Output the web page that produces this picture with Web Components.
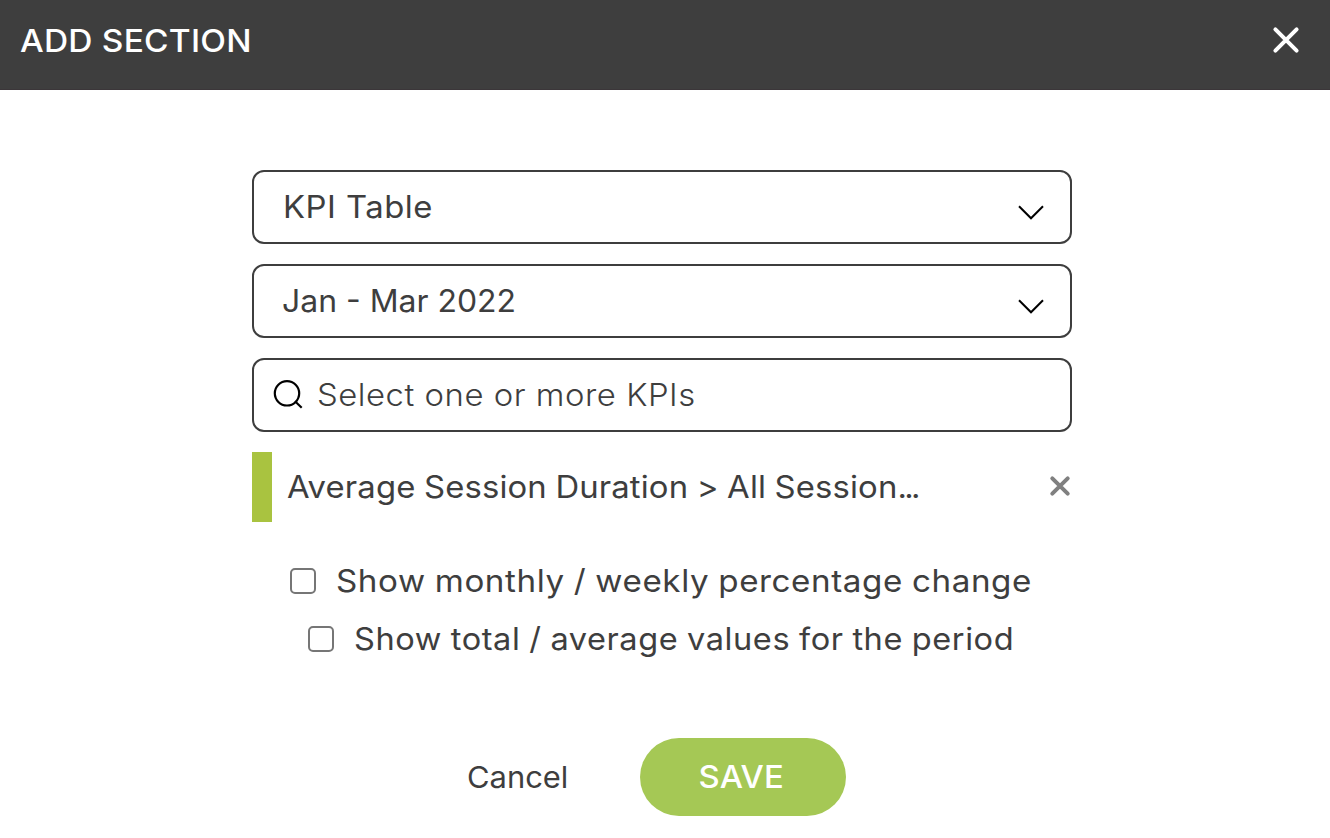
<!DOCTYPE html>
<html lang="en">
<head>
<meta charset="utf-8">
<title>Add section</title>
<style>
  html, body { margin: 0; height: 100%; }
  body {
    background: #fff;
    color: #3e3e3e;
    font: 400 31px/38px Inter, "Open Sans", sans-serif;
    overflow: hidden;
  }
</style>
</head>
<body>
<section-dialog></section-dialog>

<script>
const define = (name, markup) => {
  const template = document.createElement('template');
  template.innerHTML = markup;
  customElements.define(name, class extends HTMLElement {
    constructor() {
      super();
      this.attachShadow({ mode: 'open' }).append(template.content.cloneNode(true));
    }
  });
};

// Text with slightly extended letterforms; --stretch sets the horizontal scale.
define('wide-text', `
  <style>
    :host {
      display: inline-block; white-space: nowrap;
      transform: scaleX(var(--stretch, 1)); transform-origin: var(--origin, 0 50%);
      letter-spacing: var(--tracking, 0); word-spacing: var(--gap, 0);
    }
  </style>
  <slot></slot>
`);

define('dialog-header', `
  <style>
    :host {
      display: flex; align-items: center; justify-content: space-between;
      box-sizing: border-box; height: 90px; padding: 0 29px 9px 20px;
      background: #3e3e3e; border-bottom: 1px solid #3b3639; color: #fff;
      --stretch: 1.08; --tracking: .2px;
    }
    h1 { margin: 2px 0 0; font-size: 31px; font-weight: 500; }
    button { display: block; padding: 0; border: 0; background: none; color: inherit; }
    svg { display: block; }
  </style>
  <h1><wide-text><slot></slot></wide-text></h1>
  <button aria-label="Close">
    <svg width="30" height="30" viewBox="0 0 30 30" fill="none" stroke="currentColor" stroke-width="4" stroke-linecap="round"><path d="M4.4 4.4 25.6 25.6M25.6 4.4 4.4 25.6"/></svg>
  </button>
`);

define('select-field', `
  <style>
    :host {
      display: flex; align-items: center; justify-content: space-between;
      box-sizing: border-box; height: 74px; padding: 0 25px 0 var(--inset, 29px);
      border: 2px solid #3e3e3e; border-radius: 12px;
    }
    svg { display: block; margin-top: 10px; }
  </style>
  <wide-text><slot></slot></wide-text>
  <svg width="28" height="16" viewBox="0 0 28 16" fill="none" stroke="#000" stroke-width="2"><path d="M2 2.3 14 14.3 26 2.3"/></svg>
`);

define('search-field', `
  <style>
    :host {
      display: flex; align-items: center; gap: 12.6px;
      box-sizing: border-box; height: 74px; padding: 0 20px 0 19px;
      border: 2px solid #3e3e3e; border-radius: 12px;
      --stretch: 1.06; --tracking: .49px;
    }
    wide-text { font-weight: 300; }
    svg { display: block; flex: none; margin-top: -1px; }
  </style>
  <svg width="31" height="31" viewBox="0 0 31 31" fill="none" stroke="#000" stroke-width="2.2"><circle cx="14" cy="14.3" r="12.2"/><path d="M22 22.3 28.7 28.8"/></svg>
  <wide-text><slot></slot></wide-text>
`);

define('kpi-chip', `
  <style>
    :host {
      display: flex; align-items: center; justify-content: space-between;
      box-sizing: border-box; height: 70px;
      padding-left: 15px; border-left: 20px solid #a9c340;
      --stretch: 1.06; --tracking: .12px; --gap: -.8px;
    }
    button { display: block; padding: 0; border: 0; background: none; }
    svg { display: block; margin-top: -2px; }
  </style>
  <wide-text><slot></slot></wide-text>
  <button aria-label="Remove">
    <svg width="24" height="24" viewBox="0 0 24 24" fill="none" stroke="#808080" stroke-width="4" stroke-linecap="round"><path d="M4.3 4.3 19.7 19.7M19.7 4.3 4.3 19.7"/></svg>
  </button>
`);

define('check-option', `
  <style>
    :host { display: block; --gap: -.8px; }
    label { display: flex; align-items: center; gap: 20px; height: 58px; }
    input {
      appearance: none; box-sizing: border-box; width: 26px; height: 26px; margin: 0;
      border: 2px solid #767676; border-radius: 5px; background: #fff;
    }
  </style>
  <label><input type="checkbox"><wide-text><slot></slot></wide-text></label>
`);

define('dialog-button', `
  <style>
    :host { display: block; --stretch: 1.03; }
    :host([primary]) { --stretch: 1.06; --origin: 50% 50%; }
    button {
      display: block; height: 78px; padding: 0; border: 0; background: none;
      font: inherit; font-size: 30px; color: inherit;
    }
    :host([primary]) button {
      width: 206px; padding-right: 3px; border-radius: 39px; background: #a5c855; color: #fff;
      font-size: 31px; font-weight: 500;
    }
  </style>
  <button><wide-text><slot></slot></wide-text></button>
`);

define('section-dialog', `
  <style>
    :host { display: block; }
    main { display: flex; flex-direction: column; width: 820px; margin-left: 252px; padding-top: 80px; }
    .fields { display: flex; flex-direction: column; gap: 20px; }
    .type { --stretch: 1.06; --tracking: .45px; }
    .period { --stretch: 1.03; --inset: 28px; }
    .options { padding-top: 30px; }
    .change { --stretch: 1.07; --tracking: .55px; padding-left: 38px; }
    .total { --stretch: 1.05; --tracking: .53px; padding-left: 56px; }
    footer { display: flex; padding: 70px 0 0 215px; }
    .cancel { width: 173px; }
    .dots { letter-spacing: -2.6px; }
  </style>
  <dialog-header>ADD SECTION</dialog-header>
  <main>
    <div class="fields">
      <select-field class="type">KPI Table</select-field>
      <select-field class="period">Jan - Mar 2022</select-field>
      <search-field>Select one or more KPIs</search-field>
      <kpi-chip>Average Session Duration &gt; All Session<span class="dots">...</span></kpi-chip>
    </div>
    <div class="options">
      <check-option class="change">Show monthly / weekly percentage change</check-option>
      <check-option class="total">Show total / average values for the period</check-option>
    </div>
    <footer>
      <dialog-button class="cancel">Cancel</dialog-button>
      <dialog-button primary>SAVE</dialog-button>
    </footer>
  </main>
`);
</script>
</body>
</html>
